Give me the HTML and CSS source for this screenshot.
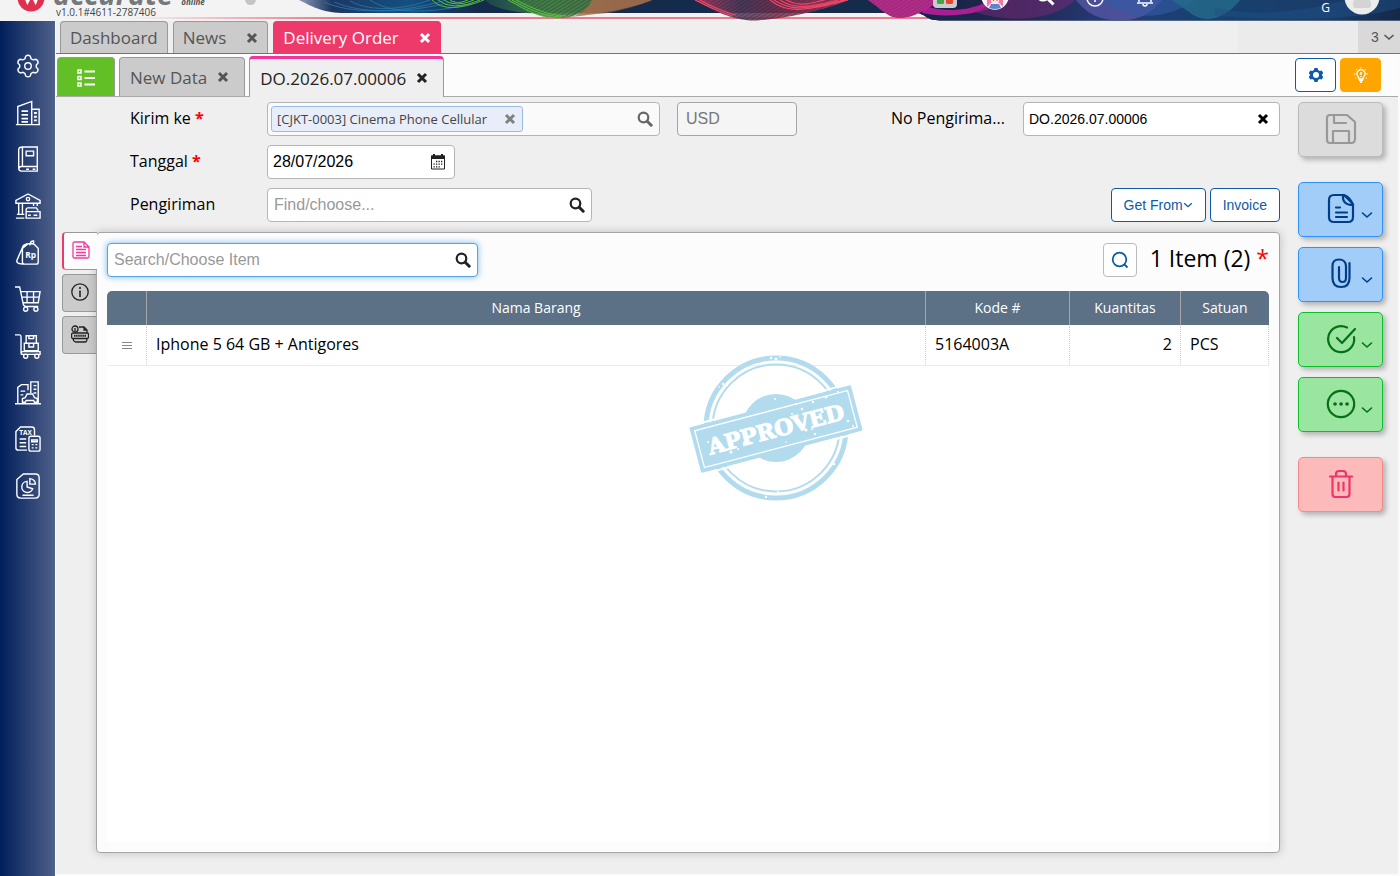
FILE: index.html
```html
<!DOCTYPE html>
<html lang="id">

<head>
    <meta charset="UTF-8">
    <meta name="viewport" content="width=device-width, initial-scale=1.0">
    <title>Delivery Order</title>
    <link rel="stylesheet" href="styles.css">
</head>

<body>
    <!-- shared icons -->
    <svg class="sprite" aria-hidden="true">
        <symbol id="i-search" viewBox="0 0 16 16">
            <circle cx="6.5" cy="6.5" r="4.8" fill="none" stroke="currentColor" stroke-width="2.2" />
            <path d="M10.2 10.2l4 4" stroke="currentColor" stroke-width="3" stroke-linecap="round" />
        </symbol>
        <symbol id="i-close" viewBox="0 0 12 12">
            <path d="M2 2l8 8M10 2l-8 8" stroke="currentColor" stroke-width="3" />
        </symbol>
        <symbol id="i-down" viewBox="0 0 12 12">
            <path d="M1.5 4l4.5 4 4.5-4" fill="none" stroke="currentColor" stroke-width="1.6" />
        </symbol>
    </svg>

    <header class="header">
        <svg class="waves" viewBox="0 0 1400 21" preserveAspectRatio="xMaxYMin slice" aria-hidden="true">
            <defs>
                <linearGradient id="line" gradientUnits="userSpaceOnUse" x1="130" x2="928" y1="0" y2="0">
                    <stop offset="0" stop-color="#ee7a8c" stop-opacity="0" />
                    <stop offset=".25" stop-color="#ee7a8c" />
                    <stop offset="1" stop-color="#ee7a8c" />
                </linearGradient>
                <linearGradient id="navy" x1="0" x2="1">
                    <stop offset="0" stop-color="#8d9dbb" />
                    <stop offset=".03" stop-color="#1d3762" />
                    <stop offset=".1" stop-color="#14507f" />
                    <stop offset=".16" stop-color="#152b4b" />
                    <stop offset="1" stop-color="#152b4b" />
                </linearGradient>
                <linearGradient id="right" x1="0" x2="1">
                    <stop offset="0" stop-color="#15254a" />
                    <stop offset=".2" stop-color="#22254d" />
                    <stop offset=".4" stop-color="#243c78" />
                    <stop offset=".6" stop-color="#17426f" />
                    <stop offset=".85" stop-color="#1b3c69" />
                    <stop offset="1" stop-color="#14284a" />
                </linearGradient>
                <linearGradient id="greenOrange" x1="0" x2="1">
                    <stop offset="0" stop-color="#2f7a52" stop-opacity=".5" />
                    <stop offset=".4" stop-color="#5cb03c" />
                    <stop offset=".6" stop-color="#a07048" />
                    <stop offset="1" stop-color="#b5503f" stop-opacity=".6" />
                </linearGradient>
                <linearGradient id="redWave" x1="0" x2="1">
                    <stop offset="0" stop-color="#d63c5e" />
                    <stop offset=".3" stop-color="#5b3c5c" />
                    <stop offset=".55" stop-color="#8a2f4c" />
                    <stop offset="1" stop-color="#cf3a5a" />
                </linearGradient>
                <pattern id="hatch" width="5" height="3" patternUnits="userSpaceOnUse" patternTransform="rotate(-32)">
                    <path d="M0 1h5" stroke="#0f203c" stroke-width="1" opacity=".6" />
                </pattern>
            </defs>
            <path d="M130 17h798v2h-798Z" fill="url(#line)" />
            <path d="M299 0C315 8 324 13 345 13H918C928 16 926 20 940 20.500H1400V0Z" fill="url(#navy)" />
            <path d="M918 13C928 16 926 20 940 20.500H1400V0H918Z" fill="url(#right)" />
            <g fill="none" stroke="#2a78ad" stroke-width="1" opacity=".8">
                <path d="M324 2C350 14 400 14 446 0M334 2C365 15 410 13 455 1M350 1C372 13 405 9 430 0M370 0C390 14 430 14 470 4" />
            </g>
            <g fill="none" stroke="#54bd3e" stroke-width="1">
                <path d="M432 0Q446 15 484 0M438 0Q452 12 480 0M444 0Q455 8 474 0M450 0Q456 5 468 0" />
            </g>
            <path d="M485 0C500 17 570 15 600 14C625 11 640 4 652 0Z" fill="url(#greenOrange)" opacity=".65" />
            <path d="M508 0C530 12 540 18 560 18C580 18 590 5 597 0Z" fill="#4a8c45" opacity=".8" />
            <path d="M508 0C530 12 540 18 560 18C580 18 590 5 597 0Z" fill="url(#hatch)" />
            <g fill="none" stroke="#58c23c" stroke-width="1">
                <path d="M508 0C530 12 540 18 560 18M512 0C534 12 545 16 562 17M516 0C536 10 548 15 566 16" />
            </g>
            <path d="M560 18C580 18 588 8 592 0H652C640 6 600 15 560 18Z" fill="#a4724c" opacity=".8" />
            <path d="M695 0C720 14 735 20.500 755 20.500C785 19 830 9 848 0Z" fill="url(#redWave)" opacity=".85" />
            <path d="M695 0C720 14 735 20.500 755 20.500C785 19 830 9 848 0Z" fill="url(#hatch)" />
            <g fill="none" stroke="#f04468" stroke-width="1.200">
                <path d="M695 0C710 8 720 12 732 16M700 0C712 7 725 12 736 15M770 0C785 12 800 13 848 0M774 0C790 10 800 11 844 0M780 0C792 8 804 9 838 0M786 0C796 5 804 6 824 0" />
            </g>
            <path d="M868 0C885 12 888 18 901 18C914 18 925 9 944 0Z" fill="#bb2c8b" />
            <path d="M868 0C885 12 888 18 901 18C914 18 925 9 944 0Z" fill="url(#hatch)" opacity=".5" />
            <path d="M922 13C945 18 980 16 1010 0H990C970 12 945 12 925 6Z" fill="#c21fa0" opacity=".85" />
            <path d="M975 12C1010 24 1055 20 1075 0H1000Z" fill="#6c2a73" opacity=".6" />
            <path d="M1076 0C1090 18 1105 20 1122 20.500C1145 20 1155 8 1162 0Z" fill="#52539d" opacity=".85" />
            <path d="M1100 0C1125 18 1160 24 1195 0Z" fill="#335aa6" opacity=".6" />
            <path d="M1172 0C1190 12 1195 19 1208 19C1225 18 1235 6 1240 0Z" fill="#256b8b" opacity=".8" />
            <path d="M1215 8C1260 18 1310 10 1345 0H1400V8C1350 22 1280 20 1215 16Z" fill="#1c4f84" opacity=".5" />
        </svg>

        <div class="brand">
            <svg class="brand-logo" viewBox="0 0 28 28" aria-hidden="true">
                <circle cx="14" cy="14" r="13.500" fill="#e0304f" />
                <path d="M7 8l3.500 9 4-8 4 8 3.500-9" fill="none" stroke="#fff" stroke-width="3.500" />
            </svg>
            <div class="brand-text">
                <div class="brand-name">accurate<small>online</small></div>
                <div class="version">v1.0.1#4611-2787406</div>
            </div>
            <span class="status-dot"></span>
        </div>

        <div class="header-tools">
            <svg width="24" height="24" viewBox="0 0 24 24" aria-label="Apps">
                <rect width="24" height="24" rx="4" fill="#cdc9d0" />
                <rect x="4" y="11" width="7" height="9" rx="1.500" fill="#3fa648" />
                <rect x="13" y="11" width="7" height="9" rx="1.500" fill="#e8452f" />
            </svg>
            <svg width="28" height="28" viewBox="0 0 28 28" aria-label="Assistant">
                <circle cx="14" cy="14" r="13" fill="#f7eef4" stroke="#fff" stroke-width="1.500" />
                <path d="M6 25V14a8 8 0 0 1 16 0v11l-4-4h-8Z" fill="#f477a5" />
                <path d="M10 14h8v6q-4 4-8 0Z" fill="#fde0d8" />
                <path d="M10 22h8l2 4q-6 2-12 0Z" fill="#5d84c9" />
                <path d="M12 18h1M15.500 18h1" stroke="#7a3350" stroke-width="1.500" />
            </svg>
            <svg width="20" height="20" viewBox="0 0 20 20" aria-label="Search">
                <circle cx="8" cy="8" r="6.500" fill="none" stroke="#fff" stroke-width="2" />
                <path d="M12.500 12.500l6 6" stroke="#fff" stroke-width="3" />
            </svg>
            <svg width="20" height="20" viewBox="0 0 20 20" aria-label="Help">
                <circle cx="10" cy="10" r="8" fill="none" stroke="#fff" stroke-width="1.500" />
                <path d="M10 9v5" stroke="#fff" stroke-width="1.500" />
            </svg>
            <svg width="20" height="20" viewBox="0 0 20 20" aria-label="Notifications">
                <path d="M4 14V8a6 6 0 0 1 12 0v6M2 15h16" fill="none" stroke="#fff" stroke-width="1.500" />
                <path d="M8 16a2 2 0 0 0 4 0" fill="none" stroke="#fff" stroke-width="1.500" />
            </svg>
            <span class="user-name">G</span>
            <svg class="avatar" width="36" height="36" viewBox="0 0 36 36" aria-label="Profile">
                <circle cx="18" cy="18" r="17.500" fill="#ececec" />
                <path d="M9 24a7 7 0 0 1 7-6h4a7 7 0 0 1 7 6v2q0 3-3 3H12q-3 0-3-3Z" fill="#d4d4d4" />
            </svg>
        </div>
    </header>

    <div class="layout">
        <nav class="sidebar">
            <div class="menu">
                <a href="#" aria-label="Settings"><svg viewBox="0 0 28 28">
                        <path d="M11.500 3.500q2.500-2 5 0l.8 2.700 2.200 1.200 2.800-.7q2.800 1.200 2.500 4.200l-1.900 2v2.400l1.900 2q.3 3-2.500 4.200l-2.800-.7-2.200 1.200-.8 2.700q-2.500 2-5 0l-.8-2.700-2.200-1.200-2.800.7q-2.800-1.200-2.500-4.200l1.900-2v-2.400l-1.900-2q-.3-3 2.500-4.200l2.800.7 2.200-1.200Z" />
                        <circle cx="14" cy="14" r="3.500" />
                    </svg></a>
                <a href="#" aria-label="Company"><svg viewBox="0 0 28 28">
                        <path d="M1 26.500h26M3 26V7l15-5.500V26M18 10h8v16" />
                        <path d="M7 12h7M7 16h7M7 20h7M7 23.500h7M20.500 14h3M20.500 18h3M20.500 22h3" stroke-width="2" />
                    </svg></a>
                <a href="#" aria-label="Ledger"><svg viewBox="0 0 28 28">
                        <path d="M24 22V1H8Q4 1 4 4v20q0 3 3 3h17v-5H7q-3 0-3 2.500M8 1v21M12 5.500h8v5h-8ZM12 25h3M19 25h3" />
                    </svg></a>
                <a href="#" aria-label="Bank"><svg viewBox="0 0 28 28">
                        <path d="M1 11v-3l13-7 13 7v3ZM4 11v12M8 11v12M20 11v3M24 11v3M2 23h8M1 27h9" />
                        <circle cx="14" cy="6.500" r="1.800" />
                        <path d="M12 20h15v7H12ZM12 20v-2q0-2 2-2h9l2 3M14 24h3M20 24h4" />
                    </svg></a>
                <a href="#" aria-label="Sales"><svg viewBox="0 0 28 28">
                        <path d="M8 9l6-5h6l5 5v15q0 2-2 2H10q-2 0-2-2ZM13 4L9 6 2 22q-.5 2 1.500 3l4.500 1M16 6q0-5 4-5v4" />
                        <text x="11" y="19">Rp</text>
                    </svg></a>
                <a href="#" aria-label="Purchases"><svg viewBox="0 0 28 28">
                        <path d="M0 1h5l4 19q1 2 3 2h13M6 6h21l-2 12H9M7 12h19M13 6v12M20 6v12" />
                        <circle cx="11.500" cy="25" r="2.200" />
                        <circle cx="22.500" cy="25" r="2.200" />
                    </svg></a>
                <a href="#" aria-label="Inventory"><svg viewBox="0 0 28 28">
                        <path d="M0 2h5q1.500 0 1.500 2v18M10 11h15v8H10ZM12 11V3h11v8M15 3v3h5V3M15 11v4h5v-4M7 20h20v3H7Z" />
                        <circle cx="11.500" cy="25" r="2.200" />
                        <circle cx="23.500" cy="25" r="2.200" />
                    </svg></a>
                <a href="#" aria-label="Fixed assets"><svg viewBox="0 0 28 28">
                        <path d="M0 25.500h28M3 25V8l4-3h7v6M17 14V2h8v23M6 12h5M6 16h3M20 6h3M20 10h3M20 14h3" />
                        <path d="M8 24v-4l3-1 2-4h6l2 4 3 1v4h-3l-1-2h-8l-1 2Z" />
                    </svg></a>
                <a href="#" aria-label="Tax"><svg viewBox="0 0 28 28">
                        <path d="M13 26H4q-3 0-3-2V6l5-5h12q3 0 3 3v6M5 14h7M5 18h7M5 22h7M17 11h8q2 0 2 2v12q0 2-2 2h-8q-2 0-2-2V13q0-2 2-2ZM18 15h6v2h-6ZM18 20h2M22 20h2M18 23.500h2M22 23.500h2" />
                        <text class="tiny" x="4.500" y="10">TAX</text>
                    </svg></a>
                <a href="#" aria-label="Reports"><svg viewBox="0 0 28 28">
                        <path d="M9 1h13q4 0 4 4v18q0 4-4 4H6q-4 0-4-4V7ZM8 24h12" />
                        <path d="M13 9a6 6 0 1 0 6 8l-6-2ZM16 6v6h6q0-5-6-6Z" />
                    </svg></a>
            </div>
        </nav>

        <main class="workspace">
            <div class="tabs">
                <a href="#" class="tab">Dashboard</a>
                <a href="#" class="tab">News <svg class="ico"><use href="#i-close" /></svg></a>
                <a href="#" class="tab tab-active">Delivery Order <svg class="ico"><use href="#i-close" /></svg></a>
                <div class="tabs-space"></div>
                <button type="button" class="tab-count">3 <svg class="ico"><use href="#i-down" /></svg></button>
            </div>

            <div class="subtabs">
                <button type="button" class="list-btn" aria-label="List">
                    <svg width="20" height="20" viewBox="0 0 20 20" fill="none" stroke="#fff" stroke-width="1.500">
                        <path d="M2 2h3v3H2ZM2 8.500h3v3H2ZM2 15h3v3H2Z" />
                        <path d="M8.500 3.500H19M8.500 10H19M8.500 16.500H19" stroke-width="2" />
                    </svg>
                </button>
                <a href="#" class="subtab">New Data <svg class="ico"><use href="#i-close" /></svg></a>
                <a href="#" class="subtab subtab-active">DO.2026.07.00006 <svg class="ico"><use href="#i-close" /></svg></a>
                <div class="subtab-actions">
                    <button type="button" class="square-btn" aria-label="Preferences">
                        <svg width="16" height="16" viewBox="0 0 16 16">
                            <path d="M6.500 1h3l.6 2 1.600.9 2-.5 1.500 2.600L13.800 8l1.400 2-1.500 2.600-2-.5-1.600.9-.6 2h-3l-.6-2-1.600-.9-2 .5L.8 10l1.400-2L.8 6l1.500-2.600 2 .5L5.900 3Z" fill="currentColor" />
                            <circle cx="8" cy="8" r="3" fill="#fff" />
                        </svg>
                    </button>
                    <button type="button" class="square-btn square-btn-orange" aria-label="Tips">
                        <svg width="16" height="16" viewBox="0 0 16 16" fill="none" stroke="#fff">
                            <path d="M6 12q0-1.500-1.200-2.800a4 4 0 1 1 6.400 0Q10 10.500 10 12Z" stroke-width="1.300" />
                            <path d="M6 13.500h4M7 15.300h2M8 5v3M8 9v1" stroke-width="1.500" />
                            <path d="M8 0v1.500M3 2l1 1M13 2l-1 1M1 7h1.500M13.500 7H15M2 11.500l1-.8M14 11.500l-1-.8" />
                        </svg>
                    </button>
                </div>
            </div>

            <div class="content">
                <div class="main-col">
                    <form class="form">
                        <div class="form-row">
                            <label class="form-label" for="customer">Kirim ke <b>*</b></label>
                            <div class="field field-customer">
                                <span class="chip">[CJKT-0003] Cinema Phone Cellular
                                    <button type="button" aria-label="Remove"><svg class="ico"><use href="#i-close" /></svg></button>
                                </span>
                                <input type="text" id="customer" readonly>
                                <svg class="ico ico-search"><use href="#i-search" /></svg>
                            </div>
                            <input type="text" class="field field-currency" value="USD" aria-label="Currency" disabled>
                            <label class="form-label form-label-number" for="number">No Pengirima...</label>
                            <div class="field field-number">
                                <input type="text" id="number" value="DO.2026.07.00006">
                                <svg class="ico"><use href="#i-close" /></svg>
                            </div>
                        </div>
                        <div class="form-row">
                            <label class="form-label" for="date">Tanggal <b>*</b></label>
                            <div class="field field-date">
                                <input type="text" id="date" value="28/07/2026">
                                <svg width="16" height="16" viewBox="0 0 16 16">
                                    <path d="M1.500 2h13v13h-13Z" fill="none" stroke="#222" stroke-width="1" />
                                    <path d="M1 1.500h2V0h2v1.500h6V0h2v1.500h2V5H1Z" fill="#222" />
                                    <path d="M6 7.500h7M3.500 10.200H13M3.500 12.800H11" stroke="#222" stroke-width="1.300" stroke-dasharray="1.300 1.200" />
                                </svg>
                            </div>
                        </div>
                        <div class="form-row">
                            <label class="form-label" for="shipment">Pengiriman</label>
                            <div class="field field-shipment">
                                <input type="text" id="shipment" placeholder="Find/choose...">
                                <svg class="ico ico-search"><use href="#i-search" /></svg>
                            </div>
                            <div class="form-buttons">
                                <button type="button" class="outline-btn">Get From<svg class="ico"><use href="#i-down" /></svg></button>
                                <button type="button" class="outline-btn">Invoice</button>
                            </div>
                        </div>
                    </form>

                    <div class="detail">
                        <div class="side-tabs">
                            <button type="button" class="side-tab side-tab-active" aria-label="Items">
                                <svg width="18" height="18" viewBox="0 0 18 18" fill="none" stroke="currentColor" stroke-width="1.300">
                                    <path d="M2.500 1H12l5 5v9.500q0 1.500-1.500 1.500h-13Q1 17 1 15.500v-13Q1 1 2.500 1ZM12 1v5h5M4 5.500h6M4 8.500h10M4 11.500h10M4 14.500h10" />
                                </svg>
                            </button>
                            <button type="button" class="side-tab" aria-label="Info">
                                <svg width="18" height="18" viewBox="0 0 18 18" fill="none" stroke="currentColor" stroke-width="1.300">
                                    <circle cx="9" cy="9" r="8.200" />
                                    <path d="M9 7.500V14M9 4v2" stroke-width="1.600" />
                                </svg>
                            </button>
                            <button type="button" class="side-tab" aria-label="Document info">
                                <svg width="18" height="18" viewBox="0 0 18 18" fill="none" stroke="currentColor" stroke-width="1.300">
                                    <circle cx="4" cy="4" r="3" />
                                    <path d="M4 3v3M8 2h5l3 3v3M13 2v3h3M2 8h14q1.500 0 1.500 1.500V12q0 1.500-1.500 1.500H2Q.6 13.500.6 12V9.500Q.6 8 2 8ZM2 13.500Q2.500 17 5 17h9q2 0 2-3.500" />
                                    <path d="M3 10.800h12" stroke-width="2" stroke-dasharray="1.500 .6" />
                                </svg>
                            </button>
                        </div>

                        <section class="panel">
                            <div class="panel-head">
                                <div class="field field-item">
                                    <input type="text" placeholder="Search/Choose Item" aria-label="Search/Choose Item">
                                    <svg class="ico ico-search"><use href="#i-search" /></svg>
                                </div>
                                <button type="button" class="find-btn" aria-label="Find item">
                                    <svg width="18" height="18" viewBox="0 0 18 18" fill="none" stroke="currentColor" stroke-width="1.800">
                                        <circle cx="8.500" cy="8.500" r="6.800" />
                                        <path d="M13 13l3.500 3.500" />
                                    </svg>
                                </button>
                                <h2 class="summary">1 Item (2) <b>*</b></h2>
                            </div>

                            <div class="table-wrap">
                                <table class="items">
                                    <thead>
                                        <tr>
                                            <th class="col-drag"></th>
                                            <th>Nama Barang</th>
                                            <th class="col-code">Kode #</th>
                                            <th class="col-qty">Kuantitas</th>
                                            <th class="col-unit">Satuan</th>
                                        </tr>
                                    </thead>
                                    <tbody>
                                        <tr>
                                            <td class="drag"><svg width="12" height="10" viewBox="0 0 12 10"><path d="M1 1.500h10M1 4.500h10M1 7.500h10" stroke="#888" /></svg></td>
                                            <td>Iphone 5 64 GB + Antigores</td>
                                            <td>5164003A</td>
                                            <td class="qty">2</td>
                                            <td>PCS</td>
                                        </tr>
                                    </tbody>
                                </table>
                            </div>

                            <svg class="stamp" viewBox="0 0 176 148" aria-label="Approved">
                                <g fill="none" stroke="#b2dcee">
                                    <circle cx="88" cy="74" r="70" stroke-width="5" />
                                    <circle cx="88" cy="74" r="63.500" stroke-width="2" />
                                </g>
                                <circle cx="88" cy="74" r="34" fill="#b2dcee" />
                                <g transform="rotate(-14.800 88 75)">
                                    <rect x="4.500" y="51.500" width="167" height="47" rx="1" fill="#b2dcee" />
                                    <path d="M2 50h48M2 100h48M126 50h48M126 100h48" stroke="#fff" stroke-width="2" />
                                    <rect x="9" y="56" width="158" height="38" fill="none" stroke="#fff" stroke-width="1.300" />
                                    <text x="88" y="83" text-anchor="middle">APPROVED</text>
                                </g>
                                <!-- worn ink specks -->
                                <g fill="#fff">
                                    <circle cx="83" cy="4" r="1.200" /><circle cx="88" cy="5" r="1.500" /><circle cx="92" cy="3" r=".8" />
                                    <circle cx="35" cy="30" r="1.200" /><circle cx="39" cy="31" r="1" /><circle cx="31" cy="33" r=".8" />
                                    <circle cx="78" cy="143" r="1.200" /><circle cx="90" cy="138" r="1" /><circle cx="146" cy="110" r="1.200" />
                                    <circle cx="108" cy="50" r="1" /><circle cx="114" cy="55" r="1.300" /><circle cx="125" cy="48" r="1.200" />
                                    <circle cx="138" cy="43" r="1.500" /><circle cx="150" cy="38" r="1" /><circle cx="168" cy="45" r="1" />
                                    <circle cx="43" cy="98" r="1.500" /><circle cx="50" cy="95" r="1" /><circle cx="56" cy="89" r="1.200" />
                                    <circle cx="118" cy="76" r="1.500" /><circle cx="124" cy="75" r="1" /><circle cx="127" cy="80" r="1.200" />
                                    <circle cx="160" cy="67" r="1.300" /><circle cx="165" cy="72" r="1" /><circle cx="87" cy="45" r="1" />
                                    <circle cx="98" cy="88" r=".8" /><circle cx="20" cy="88" r="1" /><circle cx="104" cy="60" r="1" />
                                </g>
                            </svg>
                        </section>
                    </div>
                </div>

                <aside class="actions">
                    <button type="button" class="action action-save" aria-label="Save">
                        <svg width="32" height="32" viewBox="0 0 32 32">
                            <path d="M4 2h18l8 7v17q0 4-4 4H5q-3 0-3-3V5q0-3 3-3ZM9 2v8h12M8 30V18h16v12" />
                        </svg>
                    </button>
                    <button type="button" class="action action-blue action-first" aria-label="Document">
                        <svg width="32" height="32" viewBox="0 0 32 32">
                            <path d="M10 2h9l9 9v13q0 5-5 5H9q-5 0-5-5V7q0-5 5-5ZM18 2q-1 10 10 10M19 2q7 3 9 10" />
                            <path d="M11 14.500h4M11 19.500h11M11 24h11" />
                        </svg>
                        <svg class="ico caret"><use href="#i-down" /></svg>
                    </button>
                    <button type="button" class="action action-blue" aria-label="Attachments">
                        <svg width="32" height="32" viewBox="0 0 32 32">
                            <path d="M24.500 5v15q0 9-8.500 9t-8.500-9V8q0-6.500 6.500-6.500T21 8v12q0 4-3.500 4T14 20V9" />
                        </svg>
                        <svg class="ico caret"><use href="#i-down" /></svg>
                    </button>
                    <button type="button" class="action action-green" aria-label="Approve">
                        <svg width="32" height="32" viewBox="0 0 32 32">
                            <path d="M22 4.500A13 13 0 1 0 29 14M12 15l5 5L30 6" />
                        </svg>
                        <svg class="ico caret"><use href="#i-down" /></svg>
                    </button>
                    <button type="button" class="action action-green" aria-label="More">
                        <svg width="32" height="32" viewBox="0 0 32 32">
                            <circle cx="16" cy="16" r="13.200" />
                            <path d="M10 16h.1M16 16h.1M22 16h.1" stroke-width="3.600" />
                        </svg>
                        <svg class="ico caret"><use href="#i-down" /></svg>
                    </button>
                    <button type="button" class="action action-red action-first" aria-label="Delete">
                        <svg width="32" height="32" viewBox="0 0 32 32">
                            <path d="M5 8.500h22M7.500 9v17q0 3 3 3h11q3 0 3-3V9M11 8V6q0-3 3-3h4q3 0 3 3v2M13.500 14.500v8M18.500 14.500v8" />
                        </svg>
                    </button>
                </aside>
            </div>
        </main>
    </div>
</body>

</html>
```
FILE: styles.css
```css
* {
    box-sizing: border-box;
}

body {
    margin: 0;
    min-height: 100vh;
    display: flex;
    flex-direction: column;
    font-family: "Open Sans", sans-serif;
    font-size: 16px;
    background: #fbfbfb;
    color: #000;
}

button,
input {
    font-family: "Liberation Sans", Arial, sans-serif;
    font-size: 16px;
}

button {
    cursor: pointer;
}

a {
    text-decoration: none;
}

.sprite {
    display: none;
}

.ico {
    width: 12px;
    height: 12px;
    flex: none;
}

.ico-search {
    width: 16px;
    height: 16px;
    color: #222;
}

/* header */
.header {
    position: relative;
    height: 21px;
    overflow: hidden;
    display: flex;
    justify-content: space-between;
    align-items: flex-end;
    background: #f3f3f3;
}

.waves {
    position: absolute;
    top: 0;
    right: 0;
    width: 100%;
    height: 21px;
}

.brand,
.header-tools {
    position: relative;
    display: flex;
    align-items: flex-end;
}

.brand-logo {
    width: 28px;
    height: 28px;
    margin: 0 8px 9px 17px;
}

.brand-name {
    font-size: 29px;
    font-weight: 700;
    font-style: italic;
    line-height: 24px;
    color: #77787b;
}

.brand-name small {
    margin-left: 8px;
    font-size: 8px;
    line-height: 8px;
    color: #555;
}

.version {
    padding-left: 3px;
    margin-bottom: 3px;
    font-size: 10px;
    line-height: 12px;
    color: #444;
}

.status-dot {
    width: 11px;
    height: 11px;
    margin: 0 0 16px 40px;
    border-radius: 50%;
    background: #c4c4c4;
}

.header-tools {
    gap: 30px;
    padding-right: 20px;
}

.header-tools svg {
    margin-bottom: 13px;
}

.header-tools svg:nth-child(2) {
    margin: 0 -4px 11px -6px;
}

.header-tools svg:nth-child(3) {
    margin-bottom: 15px;
}

.user-name {
    margin: 0 -16px 5px 136px;
    font-size: 12px;
    line-height: 16px;
    color: #fff;
}

.header-tools .avatar {
    margin-bottom: 6px;
}

.layout {
    flex: 1;
    display: flex;
}

/* sidebar */
.sidebar {
    width: 55px;
    padding-top: 32px;
    background: linear-gradient(to right, #001f5b, #4f6089);
}

.menu {
    display: flex;
    flex-direction: column;
    align-items: center;
    justify-content: space-between;
    height: 446px;
}

.menu svg {
    display: block;
    width: 26px;
    height: 26px;
    overflow: visible;
    fill: none;
    stroke: #fff;
    stroke-width: 1.5;
}

.menu text {
    fill: #fff;
    stroke: none;
    font-size: 9px;
    font-weight: 700;
}

.menu .tiny {
    font-size: 7px;
}

/* tabs */
.workspace {
    flex: 1;
    min-width: 0;
    display: flex;
    flex-direction: column;
    margin-left: 1px;
}

.tabs {
    display: flex;
    gap: 5px;
    height: 33px;
    padding-left: 4px;
    background: #efefef;
    border-bottom: 1px solid #e63c66;
}

.tab {
    display: flex;
    align-items: center;
    gap: 20px;
    padding: 0 9px;
    border: 1px solid #999;
    border-bottom: 0;
    border-radius: 4px 4px 0 0;
    background: #cbcbcb;
    color: #555;
    font-size: 17px;
}

.tab-active {
    background: #ed3a6a;
    border-color: #ed3a6a;
    color: #fff;
}

.tabs-space {
    width: 120px;
    margin-left: auto;
    background: #ebebeb;
}

.tab-count {
    display: flex;
    align-items: center;
    gap: 4px;
    width: 42px;
    margin-left: -5px;
    padding: 0 0 0 13px;
    border: 0;
    background: #d9d9d9;
    color: #555;
    font-size: 14px;
}

.subtabs {
    display: flex;
    align-items: flex-end;
    gap: 4px;
    height: 43px;
    padding: 2px 17px 0 1px;
    margin-right: 2px;
    background: #fcfcfc;
    border-bottom: 1px solid #aaa;
}

.list-btn {
    display: flex;
    align-items: center;
    justify-content: center;
    width: 58px;
    height: 39px;
    padding: 2px 0 0;
    border: 1px solid #999;
    border-bottom: 0;
    border-radius: 4px 4px 0 0;
    background: #62c026;
}

.subtab {
    display: flex;
    align-items: center;
    gap: 10px;
    height: 39px;
    padding: 0 15px 0 10px;
    border: 1px solid #999;
    border-bottom: 0;
    border-radius: 4px 4px 0 0;
    background: #cbcbcb;
    color: #555;
    font-size: 17px;
}

.subtab-active {
    height: 41px;
    margin-bottom: -1px;
    border-top: 3px solid #f3359a;
    background: #efefef;
    color: #222;
}

.subtab-actions {
    display: flex;
    align-self: flex-start;
    gap: 4px;
    margin: 2px 0 0 auto;
}

.square-btn {
    display: flex;
    align-items: center;
    justify-content: center;
    width: 41px;
    height: 34px;
    padding: 0;
    border: 1px solid #0f5aa8;
    border-radius: 4px;
    background: #fff;
    color: #0f5aa8;
}

.square-btn-orange {
    border-color: #ffa500;
    background: #ffa500;
}

/* form */
.content {
    flex: 1;
    display: flex;
    gap: 18px;
    margin: 0 2px 2px 0;
    padding: 5px 15px 21px 6px;
    background: #efefef;
}

.main-col {
    flex: 1;
    min-width: 0;
    display: flex;
    flex-direction: column;
}

.form {
    display: grid;
    gap: 9px;
    padding-left: 68px;
    margin-bottom: 10px;
}

.form-row {
    display: flex;
    align-items: center;
}

.form-label {
    flex: none;
    width: 137px;
    padding-bottom: 2px;
}

.form-label b {
    color: #f00;
}

.form-label-number {
    width: 132px;
    margin-left: auto;
}

.field {
    display: flex;
    align-items: center;
    height: 34px;
    padding: 0 6px 0 5px;
    border: 1px solid #b5b5b5;
    border-radius: 4px;
    background: #fff;
}

.field input {
    flex: 1;
    min-width: 0;
    padding: 0;
    border: 0;
    outline: 0;
    background: none;
    color: #000;
}

.field input::placeholder {
    color: #999;
}

.field-customer {
    width: 393px;
    padding-left: 3px;
    background: #fafafa;
}

.field-customer .ico-search {
    color: #666;
}

.chip {
    display: flex;
    align-items: center;
    justify-content: space-between;
    min-width: 252px;
    height: 26px;
    padding: 0 6px 0 5px;
    border: 1px solid #99bbe8;
    border-radius: 3px;
    background: #e8eef9;
    color: #444;
    font-size: 13px;
}

.chip button {
    display: flex;
    padding: 0;
    border: 0;
    background: none;
    color: #808080;
}

.field-currency {
    width: 120px;
    margin-left: 17px;
    padding-left: 8px;
    border-color: #a5a5a5;
    background: #f5f5f5;
    color: #777;
}

.field-number {
    width: 257px;
    padding-right: 10px;
}

.field-number input {
    font-family: "Liberation Sans Narrow", "Arial Narrow", "Liberation Sans", sans-serif;
    font-size: 14px;
}

.field-date {
    width: 188px;
    padding-right: 8px;
}

.field-shipment {
    width: 325px;
    padding-left: 6px;
}

.form-buttons {
    display: flex;
    gap: 4px;
    margin-left: auto;
}

.outline-btn {
    display: flex;
    align-items: center;
    height: 34px;
    padding: 0 12px;
    border: 1px solid #0f5aa8;
    border-radius: 4px;
    background: #fff;
    color: #0f5aa8;
    font-size: 14px;
}

.outline-btn .ico {
    width: 10px;
    height: 10px;
}

/* detail panel */
.detail {
    flex: 1;
    display: flex;
}

.side-tabs {
    display: grid;
    align-content: start;
    gap: 4px;
}

.side-tab {
    display: flex;
    align-items: center;
    justify-content: center;
    width: 35px;
    height: 38px;
    margin-right: -1px;
    padding: 0 0 2px;
    border: 1px solid #999;
    border-right: 0;
    border-radius: 4px 0 0 4px;
    background: #cbcbcb;
    color: #222;
}

.side-tab-active {
    position: relative;
    z-index: 1;
    border-left: 2px solid #ed3a6a;
    background: #fcfcfc;
    color: #f03c9c;
}

.panel {
    position: relative;
    flex: 1;
    min-width: 0;
    display: flex;
    flex-direction: column;
    padding: 10px;
    border: 1px solid #a5a5a5;
    border-radius: 4px;
    background: #fcfcfc;
    box-shadow: 0 0 10px rgba(0, 0, 0, 0.2);
}

.panel-head {
    display: flex;
    align-items: center;
    margin-bottom: 14px;
}

.field-item {
    width: 371px;
    padding-left: 6px;
    border-color: #57a5e3;
    box-shadow: 0 0 6px rgba(82, 168, 236, 0.8);
}

.find-btn {
    display: flex;
    align-items: center;
    justify-content: center;
    width: 34px;
    height: 34px;
    margin-left: auto;
    padding: 0;
    border: 1px solid #bbb;
    border-radius: 4px;
    background: #fff;
    color: #0f5aa8;
}

.summary {
    margin: 0 0 0 13px;
    padding-bottom: 4px;
    font-size: 23px;
    line-height: 30px;
    font-weight: 400;
}

.summary b {
    font-weight: 400;
    color: #f00;
}

.table-wrap {
    flex: 1;
    background: #fff;
}

.items {
    width: 100%;
    table-layout: fixed;
    border-collapse: separate;
    border-spacing: 0;
}

.items th {
    height: 34px;
    padding: 0 0 2px;
    border-right: 1px solid #a5a5a5;
    background: #5c7086;
    color: #fff;
    font-size: 14px;
    font-weight: 400;
}

.items th:first-child {
    border-top-left-radius: 5px;
}

.items th:last-child {
    border-right: 0;
    border-top-right-radius: 5px;
}

.items td {
    height: 41px;
    padding: 0 8px 2px 9px;
    border-right: 1px dotted #ccc;
    border-bottom: 1px solid #ebebeb;
}

.col-drag {
    width: 40px;
}

.col-code {
    width: 144px;
}

.col-qty {
    width: 111px;
}

.col-unit {
    width: 88px;
}

.items .drag {
    padding: 0;
    text-align: center;
}

.items .qty {
    text-align: right;
}

.stamp {
    position: absolute;
    top: 121px;
    left: 50%;
    width: 176px;
    height: 148px;
}

.stamp text {
    font-family: "DejaVu Serif", serif;
    font-size: 22px;
    font-weight: 700;
    fill: #fff;
    stroke: #fff;
    stroke-width: 1px;
}

/* right action buttons */
.actions {
    display: flex;
    flex-direction: column;
    gap: 10px;
}

.action {
    position: relative;
    display: flex;
    align-items: center;
    justify-content: center;
    width: 85px;
    height: 55px;
    padding: 0 0 2px;
    border: 1px solid #bbb;
    border-radius: 5px;
    box-shadow: 3px 3px 5px rgba(0, 0, 0, 0.25);
    fill: none;
    stroke: currentColor;
    stroke-width: 2.2;
    stroke-linecap: round;
    stroke-linejoin: round;
}

.action-first {
    margin-top: 15px;
}

.action-save {
    background: #dcdcdc;
    color: #999;
}

.action-blue {
    border-color: #2f92f6;
    background: #a2cdf9;
    color: #003f87;
}

.action-green {
    border-color: #0cc02c;
    background: #9ae5a0;
    color: #067015;
}

.action-red {
    border-color: #f48a8a;
    background: #fcbaba;
    color: #ee3468;
}

/* the symbol brings its own thin stroke */
.caret {
    position: absolute;
    right: 9px;
    bottom: 15px;
}
```
